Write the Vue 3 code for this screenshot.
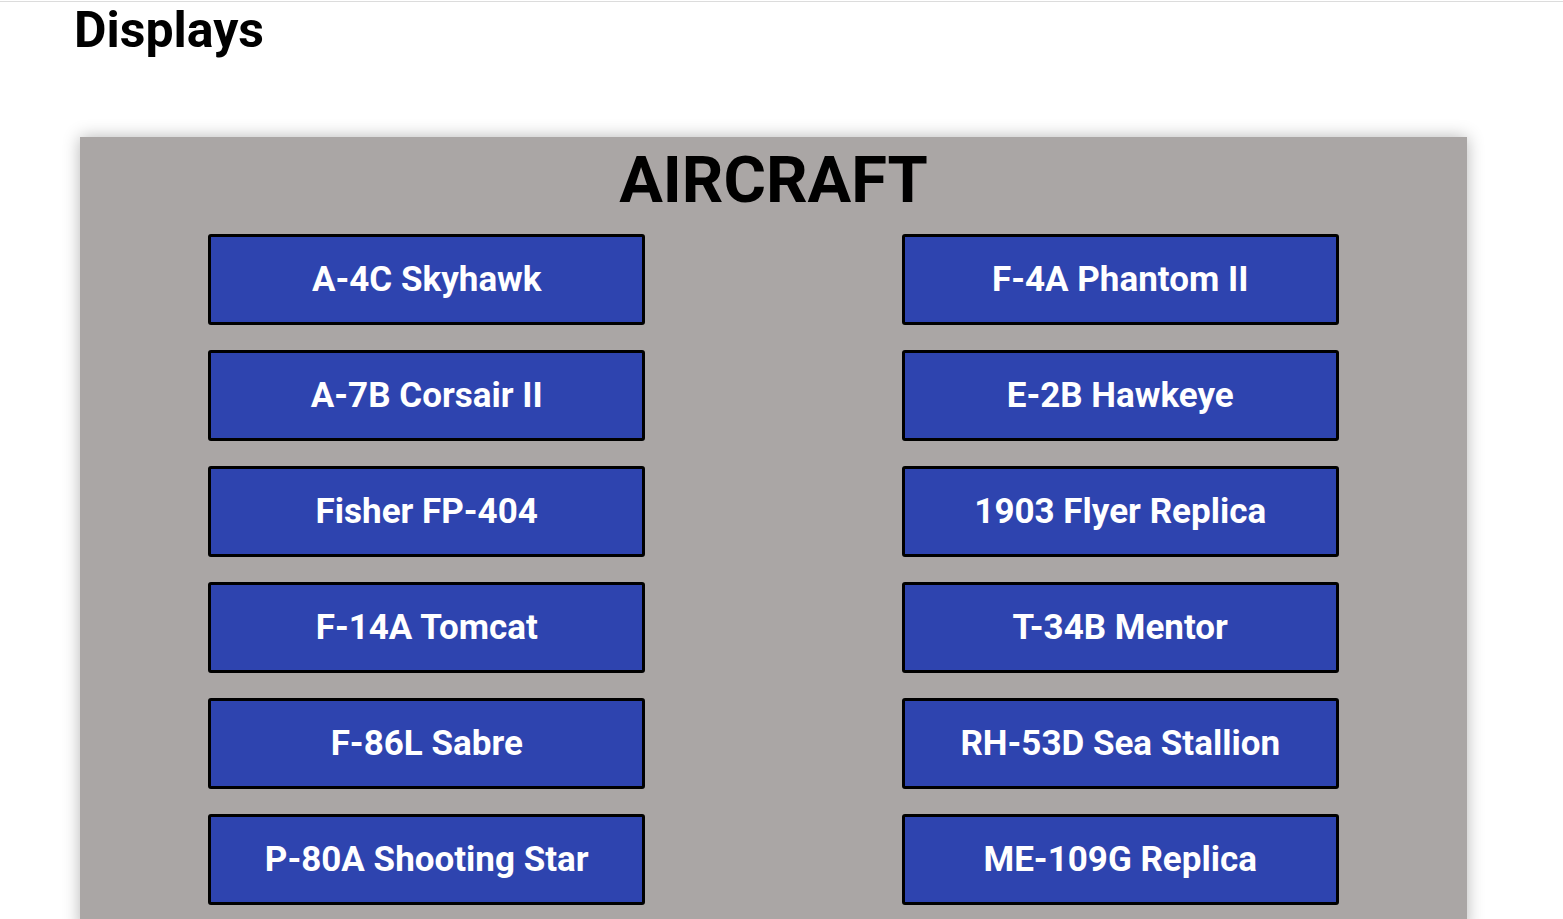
<script setup>
const aircraft = [
  'A-4C Skyhawk', 'F-4A Phantom II',
  'A-7B Corsair II', 'E-2B Hawkeye',
  'Fisher FP-404', '1903 Flyer Replica',
  'F-14A Tomcat', 'T-34B Mentor',
  'F-86L Sabre', 'RH-53D Sea Stallion',
  'P-80A Shooting Star', 'ME-109G Replica',
]
</script>

<template>
  <main class="page">
    <h1 class="title">Displays</h1>
    <section class="panel">
      <h2 class="heading">AIRCRAFT</h2>
      <div class="grid">
        <button v-for="name in aircraft" :key="name" type="button" class="plane">{{ name }}</button>
      </div>
    </section>
  </main>
</template>

<style>
body {
  background: #fff;
}
</style>

<style scoped>
.page {
  padding-top: 1px;
  font-family: Roboto, "Liberation Sans", sans-serif;
  color: #000;
}
.title {
  margin: 0 0 79px;
  padding-left: 74px;
  border-top: 1px solid #dcdcdc;
  font-size: 50px;
  line-height: 56px;
  font-weight: 700;
}
.panel {
  margin: 0 96px 0 80px;
  padding: 6px 0 26px;
  background: #aaa6a5;
  box-shadow: 0 0 16px rgba(0, 0, 0, 0.29);
}
.heading {
  margin: 0 0 16px;
  font-size: 65px;
  line-height: 75px;
  font-weight: 700;
  text-align: center;
}
.grid {
  display: grid;
  grid-template-columns: 1fr 1fr;
  justify-items: center;
  row-gap: 25px;
}
.plane {
  width: 63%;
  min-height: 91px;
  padding: 0 8px;
  border: 3px solid #000;
  border-radius: 3px;
  background: #2e44af;
  color: #fff;
  font-family: inherit;
  font-size: 35px;
  line-height: 42px;
  font-weight: 700;
  cursor: pointer;
}
</style>
